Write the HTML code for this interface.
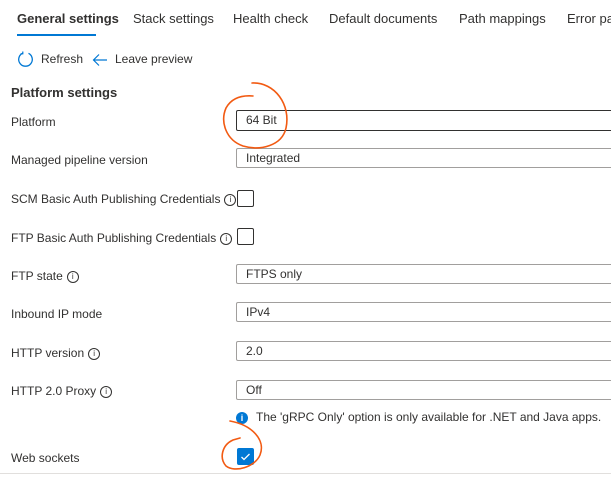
<!DOCTYPE html>
<html><head><meta charset="utf-8"><style>
body{margin:0;width:611px;height:477px;overflow:hidden;background:#fff;font-family:"Segoe UI","Liberation Sans",sans-serif;color:#323130;position:relative}
.a{position:absolute;white-space:nowrap}
.t{font-size:13px;top:11px}
.lbl{font-size:12px;left:11px}
.inp{position:absolute;left:236px;width:400px;height:20px;border:1px solid #a19f9d;border-radius:2px;box-sizing:border-box;font-size:12px;padding-left:9px;line-height:18px}
.cb{position:absolute;left:237px;width:17px;height:17px;border:1px solid #323130;border-radius:2px;box-sizing:border-box}
.i{display:inline-block;width:10px;height:10px;border:1px solid #323130;border-radius:50%;font-size:8px;line-height:10px;text-align:center;vertical-align:middle;margin-left:4px;font-style:normal}
</style></head><body>
<div class="a t" style="left:17px;font-weight:600">General settings</div>
<div style="position:absolute;left:17px;top:34px;width:79px;height:2px;background:#0078d4"></div>
<div class="a t" style="left:133px">Stack settings</div>
<div class="a t" style="left:233px">Health check</div>
<div class="a t" style="left:329px">Default documents</div>
<div class="a t" style="left:459px">Path mappings</div>
<div class="a t" style="left:567px">Error pages</div>
<svg class="a" style="left:17px;top:51px" width="17" height="17" viewBox="0 0 17 17"><path d="M5.5 2.3A6.8 6.8 0 1 0 11.5 2.3" fill="none" stroke="#0078d4" stroke-width="1.3"/><path d="M5.8 0.5v2.3H3.5" fill="none" stroke="#0078d4" stroke-width="1.2"/></svg>
<div class="a" style="left:41px;top:52px;font-size:12px">Refresh</div>
<svg class="a" style="left:92px;top:53px" width="16" height="14" viewBox="0 0 16 14"><path d="M15 7H1.5M7 1.5L1.5 7 7 12.5" fill="none" stroke="#0078d4" stroke-width="1.2"/></svg>
<div class="a" style="left:115px;top:52px;font-size:12px">Leave preview</div>
<div class="a" style="left:11px;top:85px;font-size:13px;font-weight:600">Platform settings</div>

<div class="a lbl" style="top:115px">Platform</div>
<div class="inp" style="top:110px;height:21px;border-color:#323130">64 Bit</div>
<div class="a lbl" style="top:153px">Managed pipeline version</div>
<div class="inp" style="top:148px">Integrated</div>
<div class="a lbl" style="top:192px">SCM Basic Auth Publishing Credentials<i class="i">i</i></div>
<div class="cb" style="top:190px"></div>
<div class="a lbl" style="top:231px">FTP Basic Auth Publishing Credentials<i class="i">i</i></div>
<div class="cb" style="top:228px"></div>
<div class="a lbl" style="top:269px">FTP state<i class="i">i</i></div>
<div class="inp" style="top:264px">FTPS only</div>
<div class="a lbl" style="top:307px">Inbound IP mode</div>
<div class="inp" style="top:302px">IPv4</div>
<div class="a lbl" style="top:346px">HTTP version<i class="i">i</i></div>
<div class="inp" style="top:341px">2.0</div>
<div class="a lbl" style="top:384px">HTTP 2.0 Proxy<i class="i">i</i></div>
<div class="inp" style="top:380px">Off</div>
<div class="a" style="left:236px;top:412px;width:12px;height:12px;border-radius:50%;background:#0078d4;color:#fff;font-size:9px;line-height:12px;text-align:center;font-weight:bold">i</div>
<div class="a" style="left:256px;top:410px;font-size:12px">The 'gRPC Only' option is only available for .NET and Java apps.</div>
<div class="a lbl" style="top:451px">Web sockets</div>
<div class="cb" style="top:448px;background:#0078d4;border-color:#0078d4"><svg width="15" height="15" viewBox="0 0 15 15" style="position:absolute;left:0;top:0"><path d="M3.5 8l2.5 2.5 5.5-5.5" fill="none" stroke="#fff" stroke-width="1.3"/></svg></div>
<div style="position:absolute;left:0;top:473px;width:611px;height:1px;background:#e1dfdd"></div>
<svg class="a" style="left:0;top:0" width="611" height="477"><g fill="none" stroke="#f25a12" stroke-width="1.6" stroke-linecap="round">
<path d="M252 83C275 82 291 105 286 128C282 146 260 151 243 146C226 140 220 122 226 108C231 99 240 95 253 96"/>
<path d="M230 421C252 425 266 440 260 455C255 467 235 473 226 466C219 458 222 445 233 440L240 438"/>
</g></svg>
</body></html>
